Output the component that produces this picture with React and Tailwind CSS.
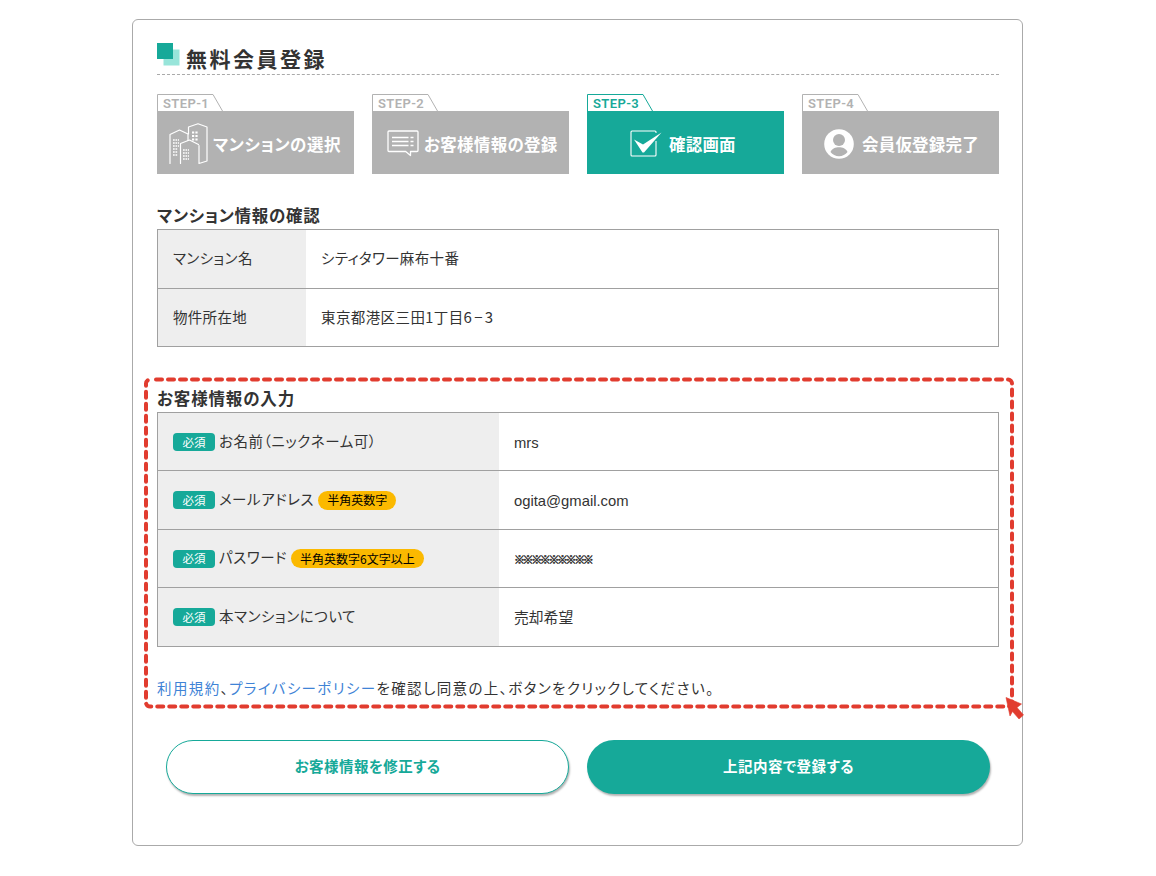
import clsx from 'clsx';

const BuildingIcon = () => (
  <svg width="39" height="42" viewBox="0 0 39 42" fill="none" stroke="white" strokeWidth="1.2" strokeLinejoin="round" strokeLinecap="round">
    <path d="M1 40.5V11.5L10.5 7l8.500 4v6.500" />
    <path d="M19.500 11V4L29 .8 38 4v34l-8 2.500V22.500" />
    <path d="M11.500 40.500V20.500L20.500 17l9 4.500" />
    <path d="M4 17h6M4 20h6M4 23h6M4 26h5M4 29h5M4 32h5" strokeWidth="1.700" strokeDasharray="1.700 .8" strokeLinecap="butt" />
    <path d="M23 9.500h6M23 13h6M23 16.500h6" strokeWidth="1.900" strokeDasharray="2.200 1.200" strokeLinecap="butt" />
    <path d="M14 27h6M14 30h6M14 33h6M14 36h6" strokeWidth="1.700" strokeDasharray="1.700 .8" strokeLinecap="butt" />
  </svg>
);

const MessageIcon = () => (
  <svg width="32" height="27" viewBox="0 0 32 27" fill="none" stroke="white" strokeWidth="1.300" strokeLinejoin="round">
    <path d="M2 1h28a1 1 0 0 1 1 1v18.500a1 1 0 0 1-1 1h-6.500V25.500l-4.800-4H2a1 1 0 0 1-1-1V2a1 1 0 0 1 1-1z" />
    <path d="M5 7.500h16.500M5 11.500h16.500M5 15.500h16.500M23.500 7.500h3M23.500 11.500h3M23.500 15.500h3" />
  </svg>
);

const CheckIcon = () => (
  <svg width="32" height="27" viewBox="0 0 32 27" fill="none">
    <path d="M26 3V2a1 1 0 0 0-1-1H2a1 1 0 0 0-1 1v23a1 1 0 0 0 1 1h23a1 1 0 0 0 1-1V11" stroke="white" strokeWidth="1.100" />
    <path d="M4 9.500l9 5L31.500 2.500 14 22.500h-1.500z" fill="white" />
  </svg>
);

const UserIcon = () => (
  <svg width="30" height="30" viewBox="0 0 30 30">
    <circle cx="15" cy="15" r="14.800" fill="white" />
    <circle cx="15" cy="11" r="6" fill="#b2b2b2" />
    <path d="M6.500 23c1.500-3.500 5-4.700 8.500-4.700s7 1.200 8.500 4.700c-2 2.700-5 4.200-8.500 4.200S8.500 25.700 6.500 23z" fill="#b2b2b2" />
  </svg>
);

const steps = [
  { label: 'STEP-1', title: 'マンションの選択', icon: BuildingIcon, box: 'pl-3 gap-[5px]', text: 'tracking-[0.6px]' },
  { label: 'STEP-2', title: 'お客様情報の登録', icon: MessageIcon, box: 'pl-[15px] gap-[5px]', text: 'tracking-[0.3px]' },
  { label: 'STEP-3', title: '確認画面', icon: CheckIcon, box: 'pl-[43px] gap-[7px]', text: 'tracking-[0.2px]', active: true },
  { label: 'STEP-4', title: '会員仮登録完了', icon: UserIcon, box: 'pl-[22px] gap-2', text: 'tracking-[0.2px]' },
];

const customerRows = [
  { label: 'お名前（ニックネーム可）', value: 'mrs' },
  { label: 'メールアドレス', note: '半角英数字', value: 'ogita@gmail.com' },
  { label: 'パスワード', note: '半角英数字6文字以上', value: '※※※※※※※※※', secret: true },
  { label: '本マンションについて', value: '売却希望' },
];

const Step = ({ step }) => {
  const Icon = step.icon;
  return (
    <li className="w-[197px] shrink-0">
      <div className={clsx('relative h-[17px] w-[66px]', step.active ? 'text-[#16a999]' : 'text-[#b2b2b2]')}>
        <svg className="absolute inset-0" width="66" height="17" viewBox="0 0 66 17" fill="none" stroke="currentColor">
          <path d="M.5 17V.5H56L65.500 17" />
        </svg>
        <span className="relative block pl-1.5 font-[Roboto] text-[13px] leading-[19px] font-semibold tracking-[0.4px] whitespace-nowrap">
          {step.label}
        </span>
      </div>
      <div className={clsx('flex h-[63px] items-center pt-0.5 text-white', step.box, step.active ? 'bg-[#16a999]' : 'bg-[#b2b2b2]')}>
        <Icon />
        <span className={clsx('pt-px text-[16.5px] font-bold whitespace-nowrap', step.text)}>{step.title}</span>
      </div>
    </li>
  );
};

const App = () => {
  return (
    <div className="h-[876px] bg-white pt-[19px] pl-[132px] font-['Noto_Sans_CJK_JP',sans-serif] text-[#333] [font-feature-settings:'palt']">
      <main className="h-[827px] w-[891px] rounded-md border border-[#aaa] pt-[23px] pr-[23px] pl-6">
        {/* Title */}
        <div className="flex h-8 items-start border-b border-dashed border-[#aaa]">
          <svg width="23" height="23" viewBox="0 0 23 23">
            <rect x="6.500" y="6.500" width="16" height="16" fill="#98e5da" />
            <rect width="16" height="16" fill="#16a999" />
          </svg>
          <h1 className="ml-1.5 text-[21px] leading-[31px] font-bold tracking-[2.500px]">無料会員登録</h1>
        </div>

        {/* Steps */}
        <ol className="mt-[19px] flex gap-[18px]">
          {steps.map((step) => (
            <Step key={step.label} step={step} />
          ))}
        </ol>

        {/* Property */}
        <h2 className="mt-[29px] h-[26px] text-[16.5px] leading-6 font-bold tracking-[0.7px]">マンション情報の確認</h2>
        <dl className="h-[118px] border border-[#a0a0a0] text-[14.5px]">
          <div className="flex h-[58.5px] border-b border-[#a0a0a0]">
            <dt className="flex w-[148px] items-center bg-[#eee] pb-px pl-[15px] tracking-[0.4px]">マンション名</dt>
            <dd className="flex items-center pb-px pl-[15px] tracking-[0.35px]">シティタワー麻布十番</dd>
          </div>
          <div className="flex h-[57.5px]">
            <dt className="flex w-[148px] items-center bg-[#eee] pb-px pl-[15px] tracking-[0.3px]">物件所在地</dt>
            <dd className="flex items-center pb-px pl-[15px] tracking-[0.4px]">
              東京都港区三田1丁目<span className="text-[15px] tracking-[2.300px]">6−3</span>
            </dd>
          </div>
        </dl>

        {/* Customer */}
        <section className="relative -mx-[13px] mt-[30px] h-[332px] px-[13px] pt-[9px]">
          <svg className="pointer-events-none absolute top-0 left-0" width="880" height="344" viewBox="0 0 880 344" fill="none">
            <rect x="2" y="2.500" width="866" height="327" rx="4" stroke="#e13c2f" strokeWidth="4" strokeDasharray="6 6" strokeDashoffset="-6" strokeLinecap="round" />
            <path d="M862 320.500L877.500 327l-4.500 3.500 6.500 7.500-4.500 4-6.500-7.500-2.500 4.500z" fill="#e13c2f" stroke="#e13c2f" strokeWidth=".6" />
          </svg>
          <h2 className="h-[26px] text-[16.5px] leading-6 font-bold tracking-[0.85px]">お客様情報の入力</h2>
          <dl className="border border-[#a0a0a0] text-[14.5px]">
            {customerRows.map((row) => (
              <div key={row.label} className="flex h-[58.25px] border-[#a0a0a0] not-last:border-b">
                <dt className="flex w-[341px] items-center bg-[#eee] pt-px pl-[15px]">
                  <span className="mr-1 flex h-[18px] w-[42px] items-center justify-center rounded bg-[#16a999] text-[11.5px] text-white">
                    必須
                  </span>
                  <span className="pb-[3px] tracking-[0.55px]">{row.label}</span>
                  {row.note && (
                    <span className="ml-1 flex h-[19px] items-center rounded-full bg-[#fbb900] px-[9px] text-[12px] text-black">
                      {row.note}
                    </span>
                  )}
                </dt>
                <dd
                  className={clsx(
                    'flex items-center pl-[15px]',
                    row.secret
                      ? "pt-[3px] font-['Noto_Sans_CJK_JP',sans-serif] text-[11px] font-bold tracking-[-2.400px] [-webkit-text-stroke:0.5px_#333] [font-feature-settings:normal]"
                      : "pt-0.5 font-['Liberation_Sans','Noto_Sans_CJK_JP',sans-serif] text-[14.8px]"
                  )}
                >
                  {row.value}
                </dd>
              </div>
            ))}
          </dl>
          <p className="mt-[29px] text-[14.5px] leading-6 tracking-[1.390px] whitespace-nowrap">
            <a className="text-[#3f83d6]">利用規約</a>、<a className="text-[#3f83d6]">プライバシーポリシー</a>
            を確認し同意の上、ボタンをクリックしてください。
          </p>
        </section>

        {/* Actions */}
        <div className="mt-[31px] flex gap-[18px] pl-[9px]">
          <button className="h-[54px] w-[403px] shrink-0 rounded-full border border-[#16a999] bg-white pb-0.5 text-[14.5px] font-bold tracking-[0.45px] text-[#16a999] shadow-[1px_2px_2px_rgba(0,0,0,0.3)]">
            お客様情報を修正する
          </button>
          <button className="h-[54px] w-[403px] shrink-0 rounded-full bg-[#16a999] pb-0.5 text-[14.5px] font-bold tracking-[0.5px] text-white shadow-[1px_2px_2px_rgba(0,0,0,0.3)]">
            上記内容で登録する
          </button>
        </div>
      </main>
    </div>
  );
};

export default App;
